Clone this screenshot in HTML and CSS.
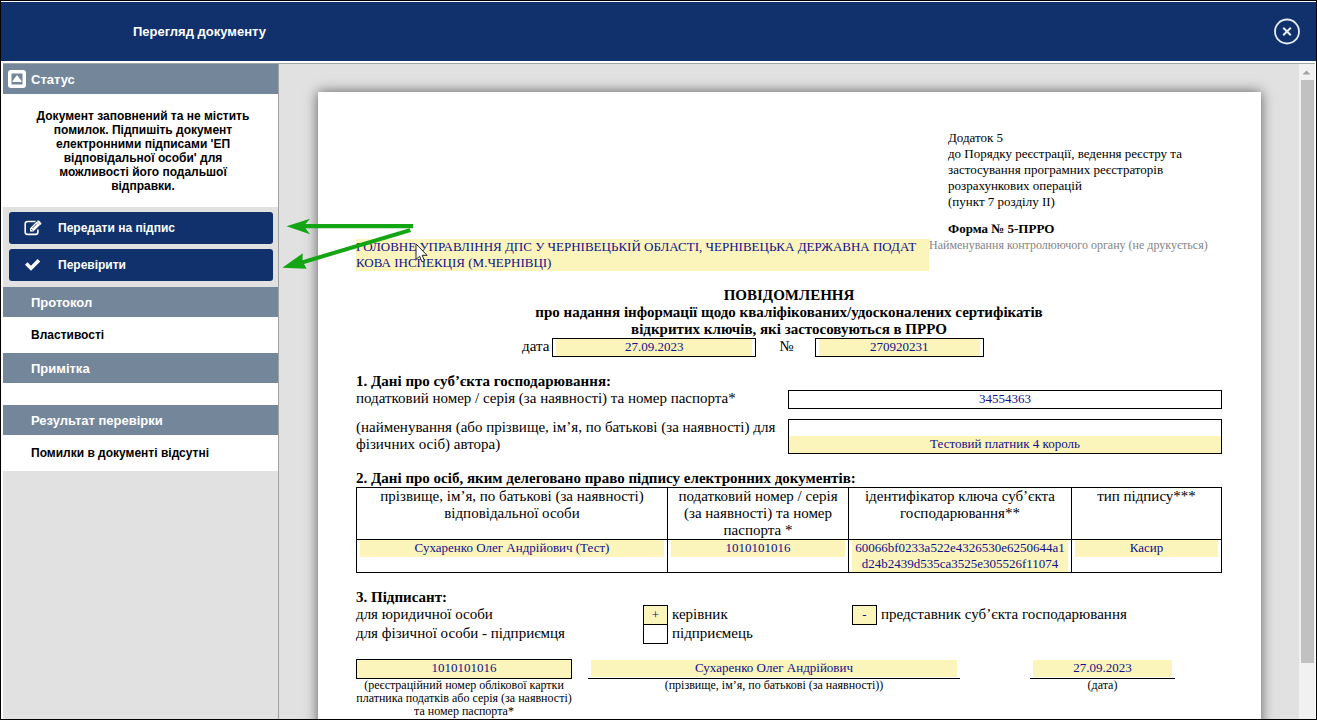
FILE: index.html
```html
<!DOCTYPE html>
<html lang="uk">
<head>
    <meta charset="UTF-8">
    <meta name="viewport" content="width=device-width, initial-scale=1.0">
    <title>Перегляд документу</title>
    <link rel="stylesheet" href="styles.css">
</head>
<body>
    <div class="window">
        <header class="topbar">
            <h1 class="topbar-title">Перегляд документу</h1>
            <button class="close-button" type="button" aria-label="Закрити">
                <svg width="28" height="28" viewBox="0 0 28 28" fill="none" stroke="#e6ecf7">
                    <circle cx="14" cy="13.500" r="12" stroke-width="1.800"/>
                    <path d="M10.200 9.700l7.600 7.600M17.800 9.700l-7.600 7.600" stroke-width="2"/>
                </svg>
            </button>
        </header>

        <div class="main">
            <aside class="sidebar">
                <h2 class="panel-title">
                    <svg class="panel-icon" width="18" height="18" viewBox="0 0 18 18">
                        <rect width="18" height="18" rx="3" fill="#fff"/>
                        <rect x="3.5" y="3.5" width="11" height="11" fill="#74869a"/>
                        <path d="M9 5l4.5 6v1h-9v-1z" fill="#fff"/>
                    </svg>
                    Статус
                </h2>
                <p class="status-text">Документ заповнений та не містить помилок. Підпишіть документ електронними підписами 'ЕП відповідальної особи' для можливості його подальшої відправки.</p>
                <div class="actions">
                    <button class="action-button" type="button">
                        <svg width="18" height="16" viewBox="0 0 18 16">
                            <path d="M11.500 1.500H3.600C2.200 1.500 1.200 2.500 1.200 3.900V12c0 1.400 1 2.400 2.400 2.400h7.900c1.400 0 2.400-1 2.400-2.400V9.500" fill="none" stroke="#fff" stroke-width="1.600"/>
                            <path d="M6 8.200L12.800 1.400l3.400 3.400L9.400 11.600H6z" fill="#fff"/>
                            <path d="M13.400.8c.5-.5 1.200-.5 1.700 0l1.900 1.900c.5.500.5 1.200 0 1.700l-.5.500-3.600-3.600z" fill="#fff"/>
                            <path d="M7 8.900l1.700 1.700M8.700 7.900l4.200-4.200" stroke="#10316b" stroke-width=".8"/>
                        </svg>
                        Передати на підпис
                    </button>
                    <button class="action-button" type="button">
                        <svg width="18" height="16" viewBox="0 0 18 16">
                            <path d="M1 7.700L3.500 5.200l3.500 3.500 6.600-6.700 2.600 2.600L7 13.800z" fill="#fff"/>
                        </svg>
                        Перевірити
                    </button>
                </div>
                <h2 class="panel-title">Протокол</h2>
                <p class="panel-body">Властивості</p>
                <h2 class="panel-title">Примітка</h2>
                <p class="panel-body panel-empty"></p>
                <h2 class="panel-title">Результат перевірки</h2>
                <p class="panel-body">Помилки в документі відсутні</p>
            </aside>

            <main class="viewer">
                <form class="paper">
                    <div class="appendix">
                        Додаток 5<br>
                        до Порядку реєстрації, ведення реєстру та<br>
                        застосування програмних реєстраторів<br>
                        розрахункових операцій<br>
                        (пункт 7 розділу II)
                        <strong class="form-number">Форма № 5-ПРРО</strong>
                    </div>

                    <div class="authority">
                        <textarea class="field authority-field" id="authority" rows="2" readonly>ГОЛОВНЕ УПРАВЛІННЯ ДПС У ЧЕРНІВЕЦЬКІЙ ОБЛАСТІ, ЧЕРНІВЕЦЬКА ДЕРЖАВНА ПОДАТКОВА ІНСПЕКЦІЯ (М.ЧЕРНІВЦІ)</textarea>
                        <label class="authority-hint" for="authority">Найменування контролюючого органу (не друкується)</label>
                    </div>

                    <h3 class="doc-title">ПОВІДОМЛЕННЯ<br>
                        про надання інформації щодо кваліфікованих/удосконалених сертифікатів<br>
                        відкритих ключів, які застосовуються в ПРРО</h3>
                    <div class="number-row">
                        <label for="date">дата</label>
                        <span class="box box-date"><input class="field" id="date" value="27.09.2023" readonly></span>
                        <label class="number-label" for="number">№</label>
                        <span class="box box-number"><input class="field" id="number" value="270920231" readonly></span>
                    </div>

                    <h4 class="section-title">1. Дані про суб’єкта господарювання:</h4>
                    <div class="subject-grid">
                        <label for="code">податковий номер / серія (за наявності) та номер паспорта*</label>
                        <span class="box"><input class="field field-plain" id="code" value="34554363" readonly></span>
                        <label for="name">(найменування (або прізвище, ім’я, по батькові (за наявності) для фізичних осіб) автора)</label>
                        <span class="box box-tall"><input class="field" id="name" value="Тестовий платник 4 король" readonly></span>
                    </div>

                    <h4 class="section-title">2. Дані про осіб, яким делеговано право підпису електронних документів:</h4>
                    <table class="persons">
                        <colgroup>
                            <col class="col-name">
                            <col class="col-code">
                            <col class="col-key">
                            <col class="col-type">
                        </colgroup>
                        <thead>
                            <tr>
                                <th>прізвище, ім’я, по батькові (за наявності)<br>відповідальної особи</th>
                                <th>податковий номер / серія<br>(за наявності) та номер<br>паспорта *</th>
                                <th>ідентифікатор ключа суб’єкта<br>господарювання**</th>
                                <th>тип підпису***</th>
                            </tr>
                        </thead>
                        <tbody>
                            <tr>
                                <td><input class="field" aria-label="Відповідальна особа" value="Сухаренко Олег Андрійович (Тест)" readonly></td>
                                <td><input class="field" aria-label="Податковий номер" value="1010101016" readonly></td>
                                <td><textarea class="field key-field" aria-label="Ідентифікатор ключа" rows="2" readonly>60066bf0233a522e4326530e6250644a1d24b2439d535ca3525e305526f11074</textarea></td>
                                <td><input class="field" aria-label="Тип підпису" value="Касир" readonly></td>
                            </tr>
                        </tbody>
                    </table>

                    <h4 class="section-title section-signer">3. Підписант:</h4>
                    <div class="signer-grid">
                        <span>для юридичної особи</span>
                        <input class="mark" id="head" value="+" readonly>
                        <label for="head">керівник</label>
                        <input class="mark" id="agent" value="-" readonly>
                        <label for="agent">представник суб’єкта господарювання</label>
                    </div>
                    <div class="signer-grid signer-second">
                        <span>для фізичної особи - підприємця</span>
                        <input class="mark mark-empty" id="owner" value="" readonly>
                        <label for="owner">підприємець</label>
                    </div>

                    <div class="signature">
                        <div class="sign-code">
                            <span class="box box-filled"><input class="field" id="sign-code" value="1010101016" readonly></span>
                            <label for="sign-code">(реєстраційний номер облікової картки платника податків або серія (за наявності) та номер паспорта*</label>
                        </div>
                        <div class="sign-name">
                            <span class="line"><input class="field" id="sign-name" value="Сухаренко Олег Андрійович" readonly></span>
                            <label for="sign-name">(прізвище, ім’я, по батькові (за наявності))</label>
                        </div>
                        <div class="sign-date">
                            <span class="line"><input class="field" id="sign-date" value="27.09.2023" readonly></span>
                            <label for="sign-date">(дата)</label>
                        </div>
                    </div>
                </form>
            </main>

            <div class="scrollbar">
                <svg width="15" height="16" viewBox="0 0 15 16"><path d="M3.500 10.500L7.500 6.500l4 4z" fill="#a3a3a3"/></svg>
                <div class="scroll-thumb"></div>
            </div>
        </div>

        <!-- pointers to the two action buttons -->
        <svg class="pointers" width="150" height="60" viewBox="280 215 150 60">
            <g fill="#14a514">
                <path d="M286.500 226.300L310 218.700l-4.500 5.300H413v4.300H305.500l4.500 6z"/>
                <path d="M282.300 267.800L302.700 253.300l-.2 6.900L409.500 228.200l1.500 3.700L304 264l2.700 4.700z"/>
            </g>
            <path d="M416 244v15.500l3.600-3.300 2.300 5.600 2.600-1.100-2.300-5.400h4.900z" fill="#fff" stroke="#222" stroke-width="1"/>
        </svg>
    </div>
</body>
</html>
```
FILE: styles.css
```css
* {
    box-sizing: border-box;
}
body {
    margin: 0;
    font-family: "Liberation Sans", Arial, sans-serif;
    font-size: 12px;
    color: #000;
    background: #fff;
}
h1, h2, h3, h4, p {
    margin: 0;
}
.window {
    position: relative;
    display: flex;
    flex-direction: column;
    height: 100vh;
    border: 1px solid #000;
    padding-top: 1px;
    overflow: hidden;
}

/* top bar */
.topbar {
    display: flex;
    flex: none;
    align-items: center;
    justify-content: space-between;
    height: 59px;
    padding: 0 15px 0 132px;
    background: #10316b;
}
.topbar-title {
    font-size: 13px;
    color: #fff;
}
.close-button {
    display: flex;
    padding: 0;
    border: none;
    background: none;
    cursor: pointer;
}
.main {
    display: flex;
    flex: 1;
    min-height: 0;
    margin: 2px 1px 0 2px;
    border-top: 1px solid #a3a6ab;
}

/* sidebar */
.sidebar {
    flex: none;
    width: 276px;
    border-right: 1px solid #a0a0a0;
    background: #e1e1e1;
}
.panel-title {
    display: flex;
    align-items: center;
    position: relative;
    height: 30px;
    padding-left: 28px;
    font-size: 13px;
    color: #fff;
    background: #74869a;
}
.panel-icon {
    position: absolute;
    left: 5px;
    top: 6px;
}
.status-text {
    padding: 15px 26px 14px 31px;
    line-height: 14px;
    font-weight: bold;
    text-align: center;
    background: #fff;
}
.actions {
    display: flex;
    flex-direction: column;
    gap: 5px;
    padding: 5px 5px 6px 6px;
}
.action-button {
    display: flex;
    align-items: center;
    gap: 16px;
    height: 32px;
    padding: 0 15px;
    border: none;
    border-radius: 3px;
    font-family: inherit;
    font-size: 12px;
    font-weight: bold;
    color: #fff;
    background: #10316b;
    cursor: pointer;
}
.panel-body {
    height: 36px;
    padding-left: 28px;
    line-height: 36px;
    font-weight: bold;
    background: #fff;
}
.panel-empty {
    height: 22px;
}

/* document */
.viewer {
    flex: 1;
    min-width: 0;
    overflow: hidden;
    background: #e1e1e1;
}
.paper {
    min-height: 900px;
    margin: 28px 38px 0 39px;
    padding: 38px 39px 38px 38px;
    font-family: "Liberation Serif", "Times New Roman", serif;
    font-size: 15px;
    line-height: 17px;
    background: #fff;
    box-shadow: 0 0 12px rgba(0, 0, 0, 0.6);
}
.appendix {
    width: 274px;
    margin-left: auto;
    font-size: 13px;
    line-height: 16px;
}
.form-number {
    display: block;
    margin: 11px 0 2px;
}
.field {
    display: block;
    width: 100%;
    height: 17px;
    margin: 0;
    padding: 0 0 2px;
    border: none;
    border-radius: 0;
    outline: none;
    resize: none;
    overflow: hidden;
    font-family: inherit;
    font-size: 13px;
    line-height: 16px;
    text-align: center;
    color: #10108c;
    background: #fbf4bb;
}
.field-plain {
    background: #fff;
}
.authority {
    display: flex;
}
.authority-field {
    flex: none;
    width: 573px;
    height: 32px;
    padding: 0 10px 0 0;
    text-align: left;
    word-break: break-all;
}
.authority-hint {
    font-size: 12px;
    line-height: 12px;
    color: #858585;
    white-space: nowrap;
}
.doc-title {
    margin-top: 16px;
    font-size: 15px;
    text-align: center;
}
.number-row {
    display: flex;
    padding-left: 166px;
}
.box {
    display: block;
    height: 19px;
    padding: 0 3px;
    border: 1px solid #000;
}
.box-date {
    width: 204px;
    margin-left: 3px;
}
.number-label {
    margin: 0 21px 0 23px;
}
.box-number {
    width: 169px;
}
.section-title {
    margin-top: 16px;
    font-size: 15px;
}
.subject-grid {
    display: grid;
    grid-template-columns: 1fr 434px;
    row-gap: 10px;
}
.subject-grid label {
    padding-right: 10px;
}
.box-tall {
    height: 35px;
    padding: 16px 0 0;
}
.persons {
    width: 100%;
    table-layout: fixed;
    border-collapse: collapse;
}
.persons th,
.persons td {
    padding: 0;
    border: 1px solid #000;
    font-weight: normal;
    vertical-align: top;
}
.persons td {
    padding: 0 3px;
}
.col-name {
    width: 311px;
}
.col-code {
    width: 181px;
}
.col-key {
    width: 223px;
}
.persons .key-field {
    height: 32px;
    padding: 0 2px;
    word-break: break-all;
}
.section-signer {
    line-height: 16px;
}
.signer-grid {
    display: grid;
    grid-template-columns: 287px 25px 184px 25px 1fr;
    line-height: 18px;
}
.signer-grid label {
    padding-left: 4px;
}
.signer-second {
    margin-top: -1px;
}
.mark {
    width: 25px;
    height: 20px;
    padding: 0;
    border: 1px solid #000;
    font-family: inherit;
    font-size: 13px;
    text-align: center;
    color: #10108c;
    background: #fbf4bb;
}
.mark-empty {
    background: #fff;
}
.signature {
    display: flex;
    margin-top: 15px;
    font-size: 12px;
    line-height: 13px;
    text-align: center;
}
.signature label {
    display: block;
}
.sign-code {
    width: 216px;
}
.sign-name {
    width: 372px;
    margin: 0 70px 0 16px;
}
.sign-date {
    width: 145px;
}
.box-filled {
    height: 20px;
    background: #fbf4bb;
}
.line {
    display: block;
    height: 20px;
    padding: 1px 3px;
    border-bottom: 1px solid #000;
}

/* scrollbar */
.scrollbar {
    display: flex;
    flex: none;
    flex-direction: column;
    width: 16px;
    padding-right: 1px;
    background: #f1f1f1;
}
.scroll-thumb {
    height: 89%;
    margin-left: 2px;
    background: #c1c1c1;
}

.pointers {
    position: absolute;
    left: 279px;
    top: 214px;
    pointer-events: none;
}
```
